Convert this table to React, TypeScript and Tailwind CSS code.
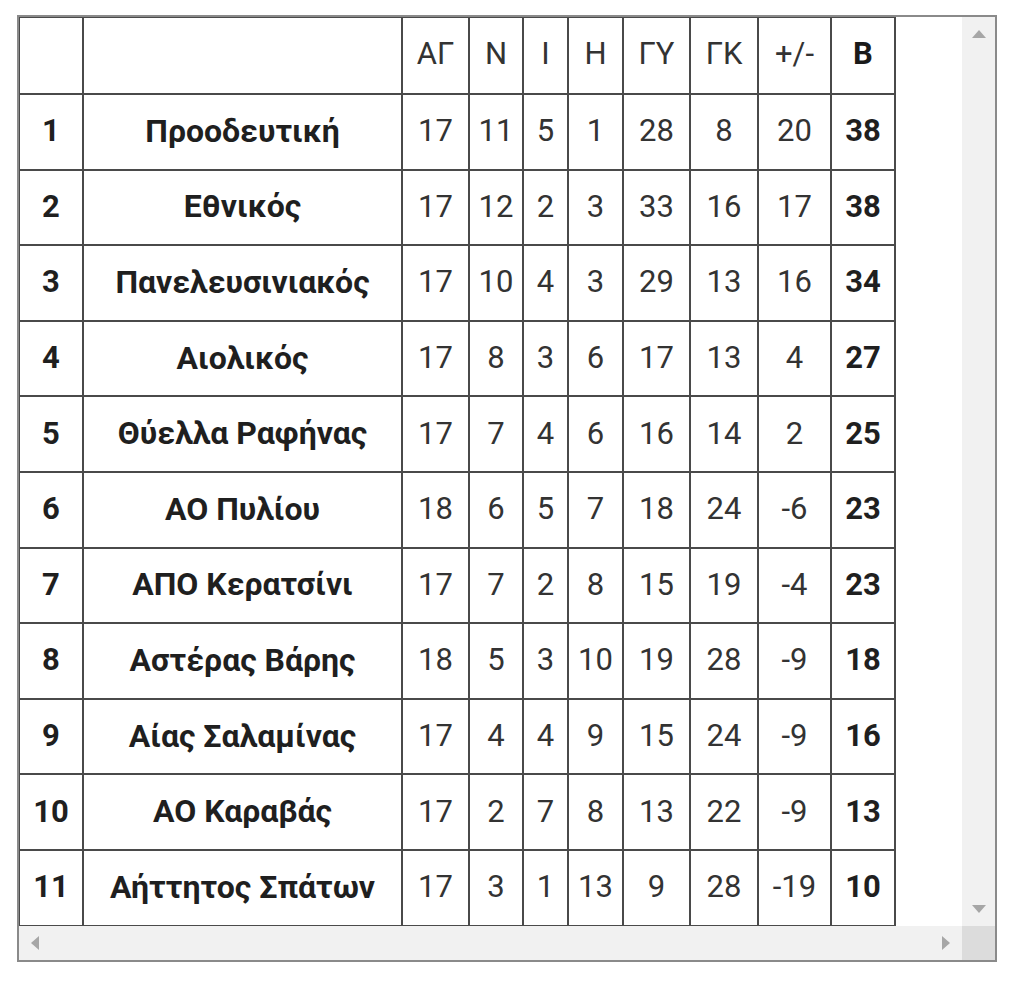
import React from "react";

const rows: [number, string, number, number, number, number, number, number, number, number][] = [
  [1, "Προοδευτική", 17, 11, 5, 1, 28, 8, 20, 38],
  [2, "Εθνικός", 17, 12, 2, 3, 33, 16, 17, 38],
  [3, "Πανελευσινιακός", 17, 10, 4, 3, 29, 13, 16, 34],
  [4, "Αιολικός", 17, 8, 3, 6, 17, 13, 4, 27],
  [5, "Θύελλα Ραφήνας", 17, 7, 4, 6, 16, 14, 2, 25],
  [6, "ΑΟ Πυλίου", 18, 6, 5, 7, 18, 24, -6, 23],
  [7, "ΑΠΟ Κερατσίνι", 17, 7, 2, 8, 15, 19, -4, 23],
  [8, "Αστέρας Βάρης", 18, 5, 3, 10, 19, 28, -9, 18],
  [9, "Αίας Σαλαμίνας", 17, 4, 4, 9, 15, 24, -9, 16],
  [10, "ΑΟ Καραβάς", 17, 2, 7, 8, 13, 22, -9, 13],
  [11, "Αήττητος Σπάτων", 17, 3, 1, 13, 9, 28, -19, 10],
];

const widths = [64, 319, 67, 54, 45, 55, 67, 68, 73, 64];
const heads = ["", "", "ΑΓ", "Ν", "Ι", "Η", "ΓΥ", "ΓΚ", "+/-", "Β"];

const cell = "border-2 border-[#4a4a4a] text-center align-middle p-0";

export default function App() {
  return (
    <div className="bg-white w-[1024px] h-[981px] pl-[17px] pt-[15px]" style={{ fontFamily: "Roboto, 'Liberation Sans', sans-serif" }}>
      <div className="w-[980px] h-[947px] border-2 border-[#8a8a8a] grid grid-cols-[1fr_33px] grid-rows-[1fr_34px]">
        <div className="overflow-hidden">
          <table className="border-collapse table-fixed w-[877px] -mt-px -ml-px">
            <colgroup>
              {widths.map((w, i) => (
                <col key={i} style={{ width: w }} />
              ))}
            </colgroup>
            <thead>
              <tr className="h-[77px]">
                {heads.map((h, i) => (
                  <th key={i} className={`${cell} text-[31px] leading-none pb-[4px] ${i === 9 ? "font-bold text-[#1a1a1a]" : "font-normal text-[#333]"}`}>
                    {h}
                  </th>
                ))}
              </tr>
            </thead>
            <tbody>
              {rows.map((r) => (
                <tr key={r[0]} className="h-[75.6px]">
                  {r.map((v, i) => (
                    <td
                      key={i}
                      className={`${cell} leading-none pb-[2px] ${
                        i === 1 ? "text-[32px]" : "text-[31px]"
                      } ${
                        i === 0 || i === 1 || i === 9 ? "font-bold text-[#1f1f1f]" : "font-normal text-[#333]"
                      } whitespace-nowrap`}
                    >
                      {v}
                    </td>
                  ))}
                </tr>
              ))}
            </tbody>
          </table>
        </div>
        <div className="bg-[#f1f1f1] flex flex-col items-center justify-between py-[13px]">
          <svg width="14" height="8" viewBox="0 0 14 8"><polygon points="7,0 14,8 0,8" fill="#a6a6a6" /></svg>
          <svg width="14" height="8" viewBox="0 0 14 8"><polygon points="0,0 14,0 7,8" fill="#a6a6a6" /></svg>
        </div>
        <div className="bg-[#f1f1f1] flex items-center justify-between px-[12px]">
          <svg width="8" height="14" viewBox="0 0 8 14"><polygon points="8,0 8,14 0,7" fill="#a6a6a6" /></svg>
          <svg width="8" height="14" viewBox="0 0 8 14"><polygon points="0,0 8,7 0,14" fill="#a6a6a6" /></svg>
        </div>
        <div className="bg-[#dcdcdc]" />
      </div>
    </div>
  );
}
